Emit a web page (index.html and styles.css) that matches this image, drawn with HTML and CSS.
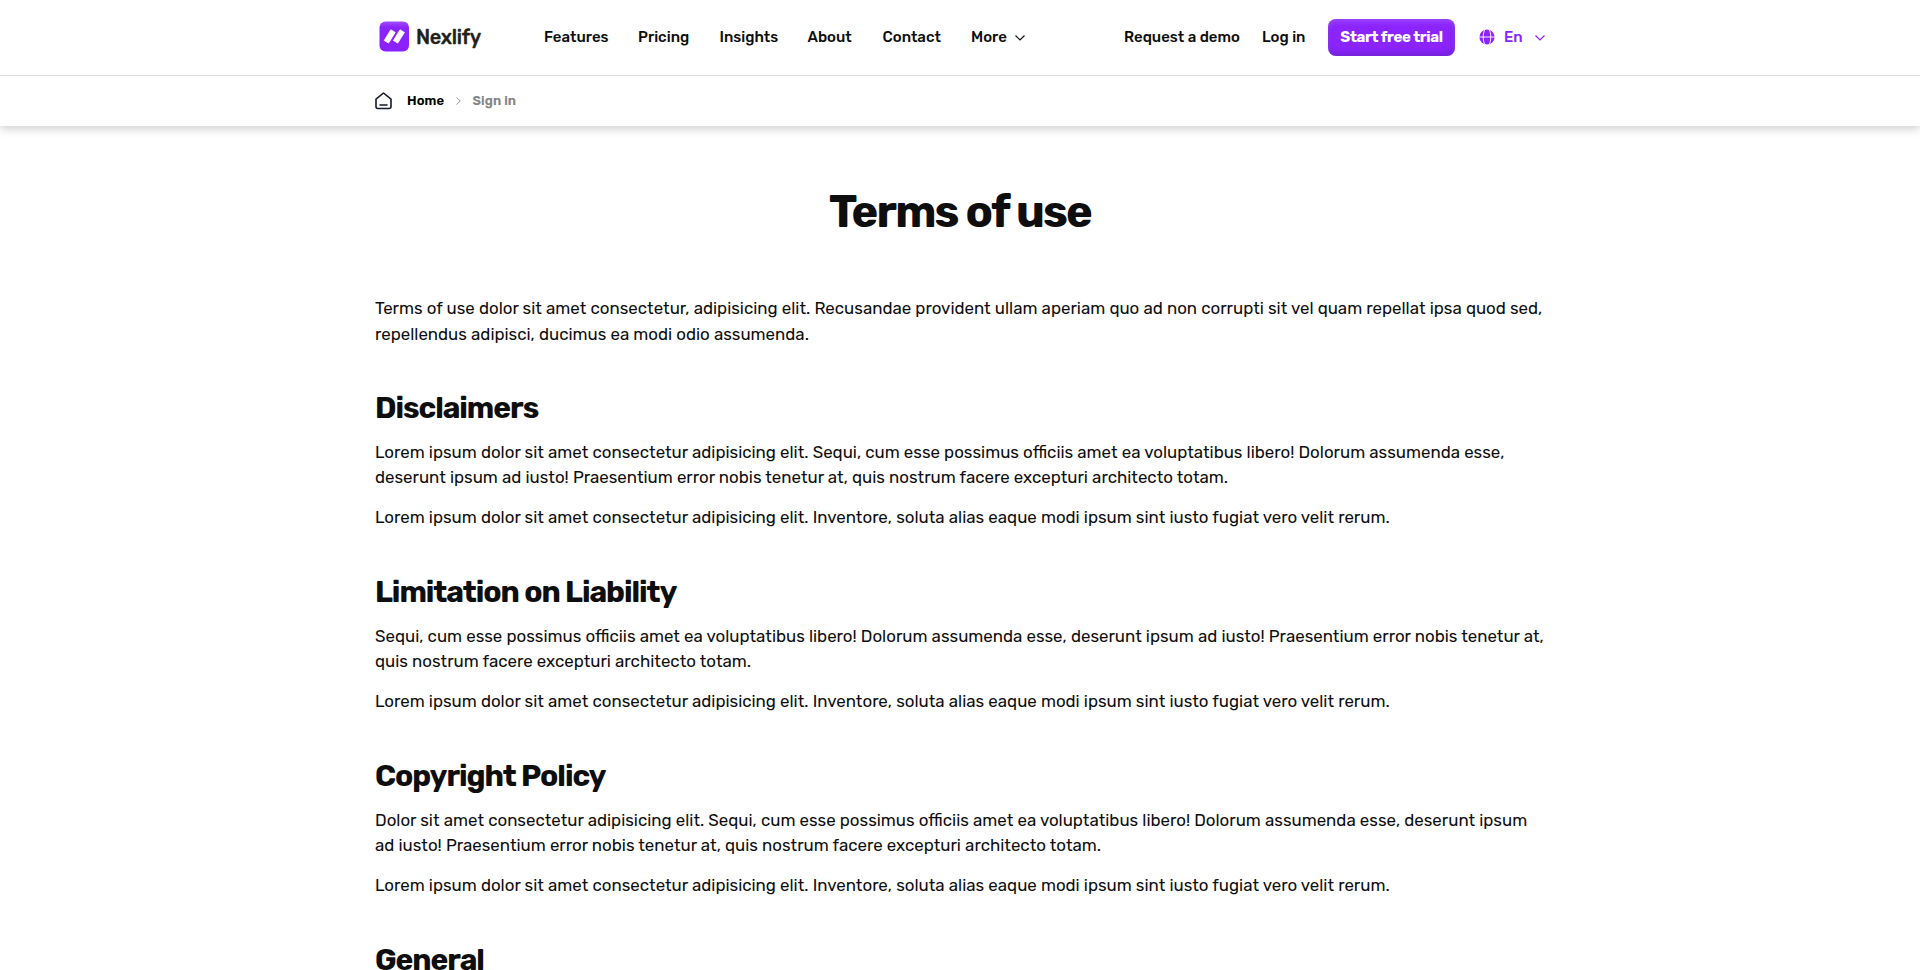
FILE: index.html
```html
<!DOCTYPE html>
<html lang="en">
<head>
<meta charset="utf-8">
<title>Terms of use</title>
<link rel="stylesheet" href="styles.css">
</head>
<body>
<header class="header">
  <div class="container topbar">
    <a class="logo">
      <svg class="logo-mark" width="36" height="38" viewBox="0 0 36 38">
        <defs><linearGradient id="lg" x1="0" y1="0" x2="0" y2="1"><stop offset="0" stop-color="#a04dfb"/><stop offset=".2" stop-color="#8c24ff"/><stop offset="1" stop-color="#8a20fa"/></linearGradient></defs>
        <rect x="4.500" y="2.500" width="29.500" height="30" rx="6" fill="url(#lg)"/>
        <path d="M9.200 21.500L15.800 10.800l4.400 2.600-6.600 10.700zM18.400 21.500L25 10.800l4.400 2.600-6.600 10.700z" fill="#fff" stroke="#fff" stroke-width=".8" stroke-linejoin="round"/>
      </svg>
      <span class="logo-name">Nexlify</span>
    </a>
    <nav class="nav">
      <a class="w-features">Features</a><a class="w-pricing">Pricing</a><a class="w-insights">Insights</a><a class="w-about">About</a><a class="w-contact">Contact</a><a class="w-more">More</a>
      <svg class="chevron" width="10" height="6" viewBox="0 0 10 6"><path d="M.5.5L5 5 9.500.5"/></svg>
    </nav>
    <div class="actions">
      <a class="w-demo">Request a demo</a><a class="w-login">Log in</a>
      <a class="button">Start free trial</a>
      <a class="language">
        <svg class="globe" width="16" height="16" viewBox="0 0 16 16"><circle cx="8" cy="8" r="7.600" fill="#8c24ff"/><path d="M0 8h16M6 0C3.600 5 3.600 11 6 16M10 0c2.400 5 2.400 11 0 16" fill="none" stroke="#fff" stroke-width=".9"/></svg>
        <span class="w-en">En</span>
        <svg class="chevron" width="10" height="6" viewBox="0 0 10 6"><path d="M.5.5L5 5 9.500.5"/></svg>
      </a>
    </div>
  </div>
  <div class="crumb-row">
    <div class="container crumbs">
      <svg width="17" height="18" viewBox="0 0 17 18" class="home"><path d="M1 7.200L8.500 1 16 7.200V14.500a2 2 0 0 1-2 2H3a2 2 0 0 1-2-2zM5 13h7"/></svg>
      <a class="crumb">Home</a>
      <svg width="5" height="8" viewBox="0 0 5 8" class="sep"><path d="M.5.5L4.200 4 .5 7.500"/></svg>
      <span class="current">Sign in</span>
    </div>
  </div>
</header>
<main class="container">
  <h1 class="title">Terms of use</h1>
  <p class="intro">Terms of use dolor sit amet consectetur, adipisicing elit. Recusandae provident ullam aperiam quo ad non corrupti sit vel quam repellat ipsa quod sed,<br>repellendus adipisci, ducimus ea modi odio assumenda.</p>
  <section class="section">
    <h2>Disclaimers</h2>
    <p>Lorem ipsum dolor sit amet consectetur adipisicing elit. Sequi, cum esse possimus officiis amet ea voluptatibus libero! Dolorum assumenda esse,<br>deserunt ipsum ad iusto! Praesentium error nobis tenetur at, quis nostrum facere excepturi architecto totam.</p>
    <p>Lorem ipsum dolor sit amet consectetur adipisicing elit. Inventore, soluta alias eaque modi ipsum sint iusto fugiat vero velit rerum.</p>
  </section>
  <section class="section">
    <h2>Limitation on Liability</h2>
    <p>Sequi, cum esse possimus officiis amet ea voluptatibus libero! Dolorum assumenda esse, deserunt ipsum ad iusto! Praesentium error nobis tenetur at,<br>quis nostrum facere excepturi architecto totam.</p>
    <p>Lorem ipsum dolor sit amet consectetur adipisicing elit. Inventore, soluta alias eaque modi ipsum sint iusto fugiat vero velit rerum.</p>
  </section>
  <section class="section">
    <h2>Copyright Policy</h2>
    <p>Dolor sit amet consectetur adipisicing elit. Sequi, cum esse possimus officiis amet ea voluptatibus libero! Dolorum assumenda esse, deserunt ipsum<br>ad iusto! Praesentium error nobis tenetur at, quis nostrum facere excepturi architecto totam.</p>
    <p>Lorem ipsum dolor sit amet consectetur adipisicing elit. Inventore, soluta alias eaque modi ipsum sint iusto fugiat vero velit rerum.</p>
  </section>
  <section class="section">
    <h2>General</h2>
  </section>
</main>
</body>
</html>
```
FILE: styles.css
```css
* { box-sizing: border-box; }
body { margin: 0; height: 970px; overflow: hidden; background: #fff; color: #0e0e0e; font: 16.885px/25px Rubik, Roboto, sans-serif; }
.container { width: 1170px; margin: 0 auto; }
.header { height: 126px; background: #fff; box-shadow: 0 3px 9px rgba(0,0,0,.19); }
.topbar { height: 75px; display: flex; align-items: center; font-size: 15px; font-weight: 500; white-space: nowrap; }
.logo { display: flex; align-items: center; width: 169px; }
.logo-name { padding-left: 5px; font-size: 20px; font-weight: 500; letter-spacing: -.3px; color: #231f1a; -webkit-text-stroke: .3px #231f1a; }
.nav, .actions { display: flex; align-items: center; }
.nav { width: 580px; }
.w-features { width: 94px; }
.w-pricing { width: 81.5px; }
.w-insights { width: 88px; }
.w-about { width: 75px; }
.w-contact { width: 88.5px; }
.w-more { width: 44px; }
.w-demo { width: 138px; }
.w-login { width: 66px; }
.button { width: 127px; height: 37px; border-radius: 8px; line-height: 36px; text-align: center; color: #fff; background: #8c24ff; font-weight: 700; letter-spacing: -.35px; box-shadow: inset 0 3px 5px rgba(255,255,255,.16), inset 0 -3px 6px rgba(60,30,120,.35); }
.language { display: flex; align-items: center; padding-left: 24px; color: #8c24ff; }
.globe { margin-bottom: 1px; }
.w-en { width: 31px; margin-left: 9px; }
.chevron { fill: none; stroke: currentColor; stroke-width: 1.2; }
.crumb-row { border-top: 1px solid #dedede; }
.crumbs { height: 49px; display: flex; align-items: center; font-size: 13px; font-weight: 600; letter-spacing: .08px; }
.home { fill: none; stroke: #161b2d; stroke-width: 1.6; stroke-linecap: round; stroke-linejoin: round; }
.crumb { width: 49px; margin-left: 15px; color: #000; }
.sep { fill: none; stroke: #999; }
.current { margin-left: 11.5px; color: #858585; }
.title { margin: 58px 0 0; font-size: 45px; line-height: 56px; letter-spacing: -.04em; text-align: center; }
.intro { margin: 55px 0 1px; line-height: 26px; }
.section { padding-top: 41px; height: 184px; }
.section h2 { margin: 0 0 13px; font-size: 30px; line-height: 38px; letter-spacing: -.035em; }
.section p { margin: 0 0 15px; }
p { white-space: nowrap; }
```
